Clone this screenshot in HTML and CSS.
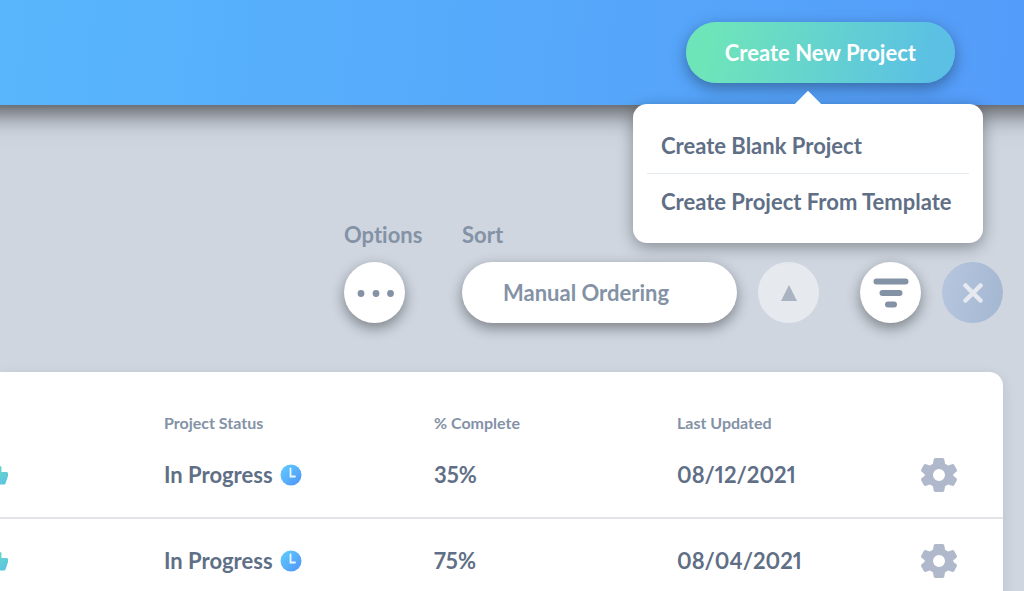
FILE: index.html
```html
<!DOCTYPE html>
<html lang="en">
<head>
    <meta charset="UTF-8">
    <meta name="viewport" content="width=device-width, initial-scale=1.0">
    <title>Projects</title>
    <link rel="stylesheet" href="styles.css">
</head>
<body>
    <svg class="icon-defs" width="0" height="0" aria-hidden="true">
        <defs>
            <linearGradient id="clock-fill" x1="0" y1="0" x2="1" y2="1">
                <stop offset="0.1" stop-color="#5fc8fb"/>
                <stop offset="0.9" stop-color="#5199fb"/>
            </linearGradient>
            <linearGradient id="thumb-fill" x1="0" y1="0" x2="1" y2="1">
                <stop offset="0" stop-color="#6ee4bb"/>
                <stop offset="1" stop-color="#5bc0e4"/>
            </linearGradient>
            <symbol id="clock" viewBox="0 0 22 22">
                <circle cx="11" cy="11" r="10.5" fill="url(#clock-fill)"/>
                <path d="M10.5 4.500V12.500h4.500" fill="none" stroke="#e9f7ff" stroke-width="1.800" stroke-linecap="round"/>
            </symbol>
            <symbol id="thumb" viewBox="0 0 24 24">
                <path d="M1 9h4v12.500H1zM7 20V9l7-7 2 .5 1.500 1.500V9H23l1 1v3l-2.500 7.500-1 1H9z" fill="url(#thumb-fill)"/>
            </symbol>
            <symbol id="gear" viewBox="0 0 36 36">
                <path fill-rule="evenodd" d="M14 1h8l1.200 1 .9 4.800 3 1.700 4.600-1.500 1.300.5 3 5.400-.3 1.500-3.400 2.900v1.400l3.400 2.900.3 1.500-3 5.400-1.300.5-4.600-1.500-3 1.700-.9 4.800L22 35h-8l-1.200-1-.9-4.800-3-1.700-4.600 1.500-1.300-.5-3-5.400.3-1.500 3.400-2.900v-1.400L.3 14.400 0 12.900l3-5.400L4.300 7l4.600 1.500 3-1.700.9-4.800zM18 12a6 6 0 1 0 0 12 6 6 0 1 0 0-12z" fill="#afb9cb"/>
            </symbol>
        </defs>
    </svg>

    <header class="header">
        <div class="create">
            <button type="button" class="create-button" aria-haspopup="true" aria-expanded="true">Create New Project</button>
            <nav class="create-menu">
                <a href="#">Create Blank Project</a>
                <a href="#">Create Project From Template</a>
            </nav>
        </div>
    </header>

    <main class="main">
        <div class="toolbar">
            <div class="tool tool-options">
                <label for="options">Options</label>
                <button type="button" id="options" class="round-button">
                    <svg width="38" height="8" viewBox="0 0 38 8" fill="#8492a6">
                        <circle cx="5" cy="4.500" r="3.400"/>
                        <circle cx="20" cy="4.500" r="3.400"/>
                        <circle cx="34.500" cy="4.500" r="3.400"/>
                    </svg>
                </button>
            </div>
            <div class="tool">
                <label for="sort">Sort</label>
                <div class="tool-row">
                    <select id="sort" class="sort-select">
                        <option>Manual Ordering</option>
                    </select>
                    <button type="button" class="round-button direction" aria-label="Sort ascending" disabled>
                        <svg width="16" height="16" viewBox="0 0 16 16"><path d="M8 0l8 16H0z" fill="#a9b3c1"/></svg>
                    </button>
                </div>
            </div>
            <div class="tool tool-filter">
                <label for="filter">Filter</label>
                <div class="tool-row">
                    <button type="button" id="filter" class="round-button">
                        <svg width="36" height="30" viewBox="0 0 36 30" stroke="#8492a6" stroke-width="6" stroke-linecap="round">
                            <path d="M3.500 3.500h29M9.500 15h17M15 26.500h6"/>
                        </svg>
                    </button>
                    <button type="button" class="round-button clear" aria-label="Clear filter" disabled>
                        <svg width="20" height="20" viewBox="0 0 20 20" stroke="#e6eaf0" stroke-width="4.500" stroke-linecap="round">
                            <path d="M2.500 2.500l15 15M17.500 2.500l-15 15"/>
                        </svg>
                    </button>
                </div>
            </div>
        </div>

        <div class="card">
            <table class="projects">
                <thead>
                    <tr>
                        <th class="col-health"></th>
                        <th class="col-status">Project Status</th>
                        <th class="col-complete">% Complete</th>
                        <th class="col-updated">Last Updated</th>
                        <th class="col-settings"></th>
                    </tr>
                </thead>
                <tbody>
                    <tr>
                        <td><svg class="thumb"><use href="#thumb"/></svg></td>
                        <td><span class="status">In Progress <svg class="clock"><use href="#clock"/></svg></span></td>
                        <td>35%</td>
                        <td>08/12/2021</td>
                        <td><button type="button" class="settings" aria-label="Project settings"><svg><use href="#gear"/></svg></button></td>
                    </tr>
                    <tr>
                        <td><svg class="thumb"><use href="#thumb"/></svg></td>
                        <td><span class="status">In Progress <svg class="clock"><use href="#clock"/></svg></span></td>
                        <td>75%</td>
                        <td>08/04/2021</td>
                        <td><button type="button" class="settings" aria-label="Project settings"><svg><use href="#gear"/></svg></button></td>
                    </tr>
                </tbody>
            </table>
        </div>
    </main>
</body>
</html>
```

FILE: styles.css
```css
* {
    box-sizing: border-box;
}

body {
    margin: 0;
    min-height: 100vh;
    overflow: hidden;
    background-color: #cfd6e0;
    color: #5f6f86;
    font-family: 'Lato', 'Liberation Sans', sans-serif;
    font-size: 22px;
    font-weight: bold;
    font-variant-ligatures: none;
    font-variant-numeric: proportional-nums;
    line-height: 24px;
}

button,
select {
    font: inherit;
    font-variant-ligatures: none;
    border: none;
    padding: 0;
    cursor: pointer;
}

svg {
    display: block;
}

.icon-defs {
    position: absolute;
}

/* Header */
.header {
    position: relative;
    z-index: 2;
    display: flex;
    justify-content: flex-end;
    padding: 22px 69px 22px 24px;
    background: linear-gradient(95deg, #58b6fc, #549cf9);
    box-shadow: 0 -24px 26px 30px rgba(0, 0, 0, 0.7);
}

.create {
    position: relative;
}

.create-button {
    display: block;
    height: 61px;
    padding: 0 39px;
    border-radius: 31px;
    background: linear-gradient(105deg, #6ee5b9 10%, #5bc0e4 90%);
    box-shadow: 0 5px 15px rgba(0, 0, 0, 0.35);
    color: #fff;
}

.create-menu {
    position: absolute;
    top: 82px;
    right: -28px;
    width: 350px;
    padding: 14px;
    border-radius: 14px;
    background-color: #fff;
    box-shadow: 0 4px 16px rgba(0, 0, 0, 0.35);
}

.create-menu::before {
    content: '';
    position: absolute;
    top: -9px;
    left: calc(50% - 10px);
    width: 20px;
    height: 20px;
    background-color: #fff;
    transform: rotate(45deg);
}

.create-menu a {
    position: relative;
    display: block;
    padding: 16px 14px 15px;
    color: inherit;
    text-decoration: none;
    white-space: nowrap;
}

.create-menu a + a {
    border-top: 1px solid #e5e9f0;
}

/* Toolbar */
.main {
    padding: 118px 21px 0 0;
}

.toolbar {
    display: flex;
    justify-content: flex-end;
    margin-bottom: 49px;
    color: #8492a6;
}

.tool {
    display: flex;
    flex-direction: column;
    gap: 15px;
}

.tool-options {
    width: 61px;
    margin-right: 57px;
}

.tool-filter {
    margin-left: 41px;
}

.tool-row {
    display: flex;
    gap: 21px;
}

.round-button {
    display: flex;
    flex: none;
    align-items: center;
    justify-content: center;
    width: 61px;
    height: 61px;
    border-radius: 50%;
    background-color: #fff;
    box-shadow: 0 5px 14px rgba(0, 0, 0, 0.4);
}

.direction {
    background-color: #e6eaef;
    box-shadow: none;
}

.clear {
    background: linear-gradient(100deg, #b7c6df, #a3b7d1);
    box-shadow: none;
}

.sort-select {
    appearance: none;
    width: 275px;
    height: 61px;
    padding: 0 41px;
    border-radius: 31px;
    background-color: #fff;
    box-shadow: 0 5px 14px rgba(0, 0, 0, 0.4);
    color: #8492a6;
}

/* Projects table */
.card {
    border-radius: 0 14px 0 0;
    background-color: #fff;
    box-shadow: 0 4px 14px rgba(0, 0, 0, 0.1);
}

.projects {
    width: 100%;
    table-layout: fixed;
    border-collapse: collapse;
    text-align: left;
}

.projects th,
.projects td {
    padding: 0;
}

.projects th {
    height: 61px;
    padding-top: 40px;
    color: #8492a6;
    font-size: 16px;
    line-height: 20px;
}

.projects td {
    height: 85px;
}

.projects tbody tr + tr {
    border-top: 2px solid #e2e4e8;
}

.col-health {
    width: 164px;
}

.col-status {
    width: 270px;
}

.col-complete {
    width: 243px;
}

.col-settings {
    width: 82px;
}

.status {
    display: flex;
    align-items: center;
    gap: 7px;
}

.clock {
    width: 22px;
    height: 22px;
}

/* The health column runs off the left side of the page */
.thumb {
    width: 24px;
    height: 24px;
    margin-left: -16px;
}

.settings {
    display: block;
    background: none;
}

.settings svg {
    width: 36px;
    height: 36px;
}
```
